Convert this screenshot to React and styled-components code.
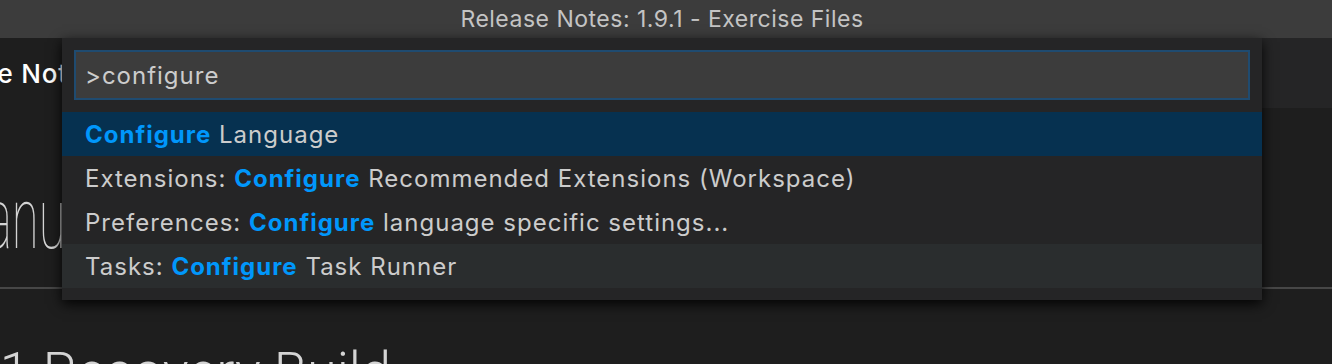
import React from "react"
import styled, { createGlobalStyle } from "styled-components"

const Global = createGlobalStyle`
  html, body {
    margin: 0;
    padding: 0;
    background: #1e1e1e;
    overflow: hidden;
  }
  #root {
    width: 1332px;
    height: 364px;
  }
`

const Window = styled.div`
  position: relative;
  width: 1332px;
  height: 364px;
  overflow: hidden;
  background: #1e1e1e;
  font-family: Inter, "Noto Sans", sans-serif;
`

const TitleBar = styled.div`
  height: 38px;
  background: #3c3c3c;
  color: #c4c4c4;
  font-size: 23px;
  letter-spacing: 0.5px;
  display: flex;
  align-items: center;
  justify-content: center;
  padding-right: 8px;
`

const TabBar = styled.div`
  height: 70px;
  background: #252526;
  display: flex;
`

const Tab = styled.div`
  width: 400px;
  background: #1e1e1e;
  display: flex;
  align-items: center;
  overflow: hidden;
  white-space: nowrap;
`

const TabLabel = styled.span`
  margin-left: -90px;
  color: #ffffff;
  font-size: 26px;
  font-weight: 500;
  letter-spacing: 0.8px;
`

const Editor = styled.div`
  overflow: hidden;
  white-space: nowrap;
`

const Heading = styled.h1`
  margin: 68px 0 0 -41px;
  font-family: Roboto, "Open Sans", sans-serif;
  font-weight: 100;
  font-size: 86px;
  line-height: 86px;
  color: #d4d4d4;
  transform: scaleX(0.57);
  transform-origin: left center;
`

const Rule = styled.hr`
  margin: 25px 0 0;
  border: none;
  height: 2px;
  background: #474747;
`

const SubHeading = styled.h2`
  margin: 56px 0 0 -86px;
  font-family: Roboto, "Open Sans", sans-serif;
  font-weight: 300;
  font-size: 54px;
  line-height: 54px;
  color: #d4d4d4;
`

const QuickOpen = styled.div`
  position: absolute;
  left: 62px;
  top: 38px;
  width: 1200px;
  height: 262px;
  box-sizing: border-box;
  background: #252526;
  box-shadow: 0 4px 12px rgba(0, 0, 0, 0.9);
  padding: 12px 0;
  display: flex;
  flex-direction: column;
`

const InputBox = styled.div`
  margin: 0 12px 12px;
  height: 50px;
  box-sizing: border-box;
  background: #3c3c3c;
  border: 2px solid #1f4b70;
  display: flex;
  align-items: center;
  padding-left: 9px;
  color: #cccccc;
  font-size: 24px;
  letter-spacing: 1px;
`

const Row = styled.div`
  height: 44px;
  display: flex;
  align-items: center;
  padding-left: 23px;
  font-size: 24px;
  letter-spacing: 1px;
  color: #cccccc;
  white-space: pre;
  background: ${(p) => (p.$selected ? "#063150" : p.$hover ? "#2a2d2e" : "transparent")};
`

const Match = styled.span`
  color: #0097fb;
  font-weight: 700;
`

const items = [
  { before: "", after: " Language", selected: true },
  { before: "Extensions: ", after: " Recommended Extensions (Workspace)" },
  { before: "Preferences: ", after: " language specific settings..." },
  { before: "Tasks: ", after: " Task Runner", hover: true },
]

export default function App() {
  return (
    <Window>
      <Global />
      <TitleBar>Release Notes: 1.9.1 - Exercise Files</TitleBar>
      <TabBar>
        <Tab>
          <TabLabel>Release Notes: 1.9.1</TabLabel>
        </Tab>
      </TabBar>
      <Editor>
        <Heading>January 2017 (version 1.9)</Heading>
        <Rule />
        <SubHeading>1.9.1 Recovery Build</SubHeading>
      </Editor>
      <QuickOpen>
        <InputBox>&gt;configure</InputBox>
        {items.map((it, i) => (
          <Row key={i} $selected={it.selected} $hover={it.hover}>
            {it.before}
            <Match>Configure</Match>
            {it.after}
          </Row>
        ))}
      </QuickOpen>
    </Window>
  )
}
